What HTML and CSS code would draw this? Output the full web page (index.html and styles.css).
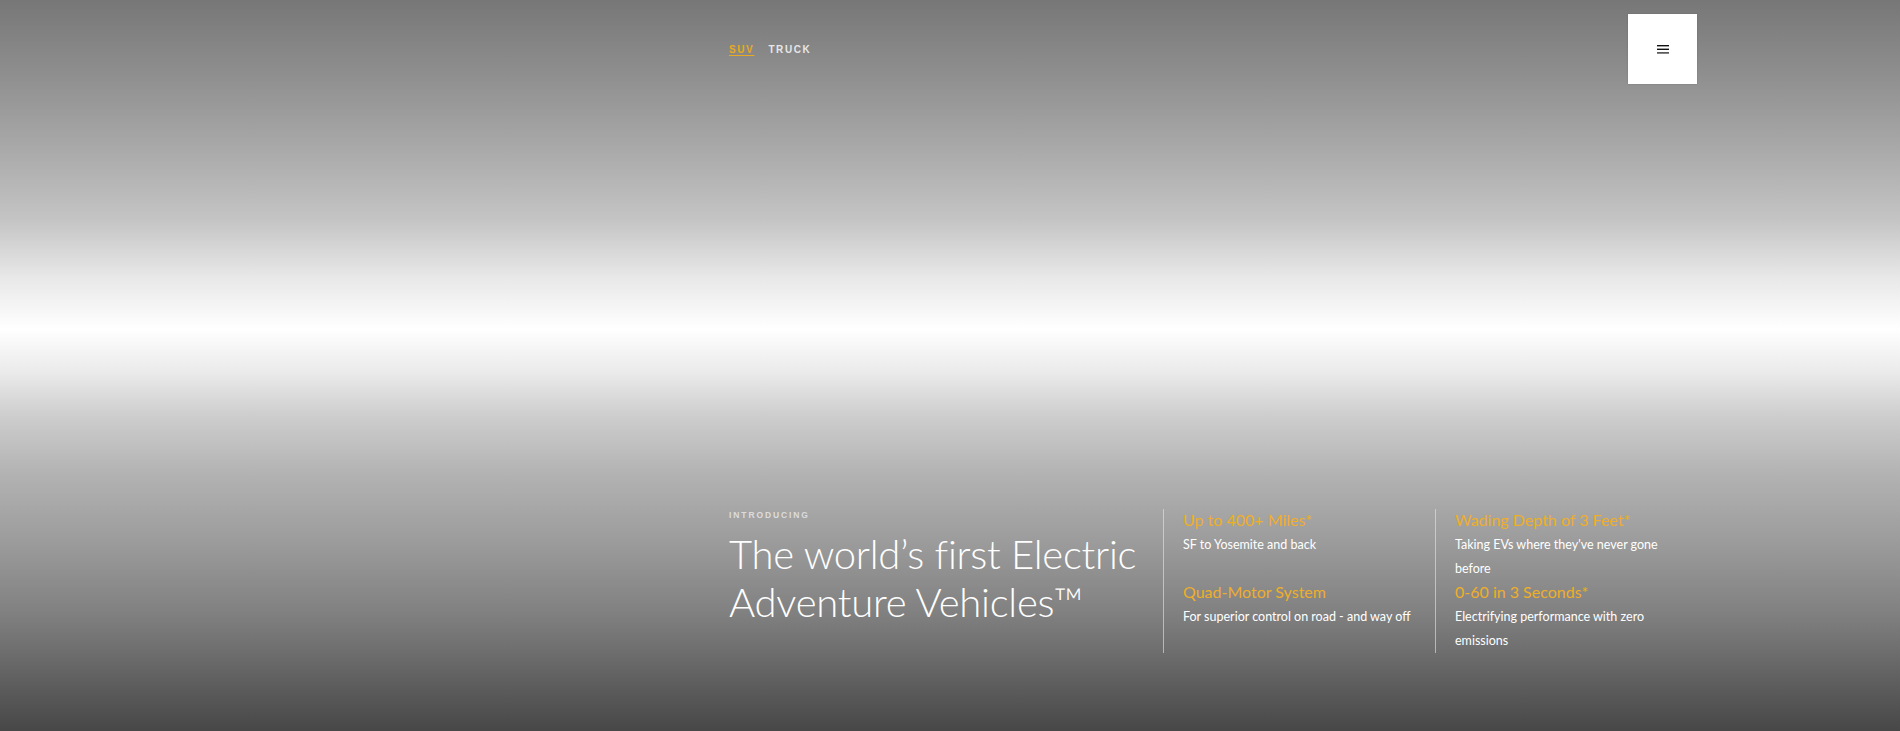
FILE: index.html
```html
<!DOCTYPE html>
<html lang="en">
<head>
<meta charset="utf-8">
<title>Electric Adventure Vehicles</title>
<link rel="stylesheet" href="styles.css">
</head>
<body>
<div class="hero">
  <header class="header">
    <nav class="tabs">
      <a class="tab tab-active" href="#">SUV</a>
      <a class="tab" href="#">TRUCK</a>
    </nav>
    <button class="menu" aria-label="Menu">
      <svg width="12" height="9" viewBox="0 0 12 9"><rect x="0" y="0" width="12" height="1.4" fill="#111"/><rect x="0" y="3.6" width="12" height="1.4" fill="#111"/><rect x="0" y="7.2" width="12" height="1.4" fill="#333"/></svg>
    </button>
  </header>
  <section class="intro">
    <div class="lead">
      <p class="label">INTRODUCING</p>
      <h1 class="title">The world’s first Electric Adventure Vehicles™</h1>
    </div>
    <div class="stats">
      <div class="stat col1">
        <h2 class="stat-head">Up to 400+ Miles*</h2>
        <p class="stat-text">SF to Yosemite and back</p>
      </div>
      <div class="stat col1">
        <h2 class="stat-head">Quad-Motor System</h2>
        <p class="stat-text">For superior control on road - and way off</p>
      </div>
      <div class="stat col2">
        <h2 class="stat-head">Wading Depth of 3 Feet*</h2>
        <p class="stat-text">Taking EVs where they've never gone before</p>
      </div>
      <div class="stat col2">
        <h2 class="stat-head">0-60 in 3 Seconds*</h2>
        <p class="stat-text">Electrifying performance with zero emissions</p>
      </div>
    </div>
  </section>
</div>
</body>
</html>
```

FILE: styles.css
```css
html, body {
  margin: 0;
  padding: 0;
}
body {
  font-family: "Lato", "Open Sans", sans-serif;
  color: #fff;
}
.hero {
  height: 731px;
  box-sizing: border-box;
  display: flex;
  flex-direction: column;
  justify-content: space-between;
  padding: 14px 203px 78px 729px;
  background: linear-gradient(180deg,
    #777777 0%,
    #8e8e8e 10%,
    #a8a8a8 20%,
    #c4c4c4 30%,
    #e8e8e8 38%,
    #ffffff 45%,
    #eaeaea 51%,
    #cdcdcd 57%,
    #b2b2b2 65%,
    #9c9c9c 74%,
    #808080 84%,
    #606060 93%,
    #474747 100%);
}
.header {
  display: flex;
  justify-content: space-between;
  align-items: center;
}
.tabs {
  display: flex;
  gap: 14px;
  align-items: center;
  padding-top: 2px;
}
.tab {
  font-family: "Liberation Sans", Arial, sans-serif;
  font-weight: 700;
  font-size: 10px;
  letter-spacing: 1.6px;
  color: #e6e6e6;
  text-decoration: none;
  line-height: 12px;
}
.tab-active {
  color: #e8aa1e;
  text-decoration: underline;
  text-underline-offset: 2px;
}
.menu {
  width: 69px;
  height: 70px;
  border: none;
  background: #fff;
  display: flex;
  align-items: center;
  justify-content: center;
  padding: 0;
  box-shadow: 0 0 2px rgba(0,0,0,0.15);
}
.menu svg {
  display: block;
}
.intro {
  display: flex;
  align-items: flex-start;
}
.lead {
  width: 434px;
}
.label {
  margin: 0;
  font-family: "Liberation Sans", Arial, sans-serif;
  font-size: 8.5px;
  line-height: 12px;
  font-weight: 700;
  letter-spacing: 1.9px;
  color: rgba(235, 235, 235, 0.8);
}
.title {
  margin: 9px 0 0;
  font-weight: 300;
  font-size: 40px;
  line-height: 48px;
  color: #fff;
  letter-spacing: -0.25px;
}
.stats {
  display: grid;
  grid-template-columns: 272px 261px;
  grid-template-rows: 72px 72px;
  grid-auto-flow: column;
}
.stat {
  border-left: 1px solid rgba(230, 230, 230, 0.6);
  padding: 0 20px 0 19px;
}
.stat-head {
  margin: 0 0 2px;
  font-size: 16px;
  line-height: 22px;
  font-weight: 400;
  color: #eeae2a;
}
.stat-text {
  margin: 0;
  font-size: 12.5px;
  line-height: 24px;
  color: #fff;
}
```
